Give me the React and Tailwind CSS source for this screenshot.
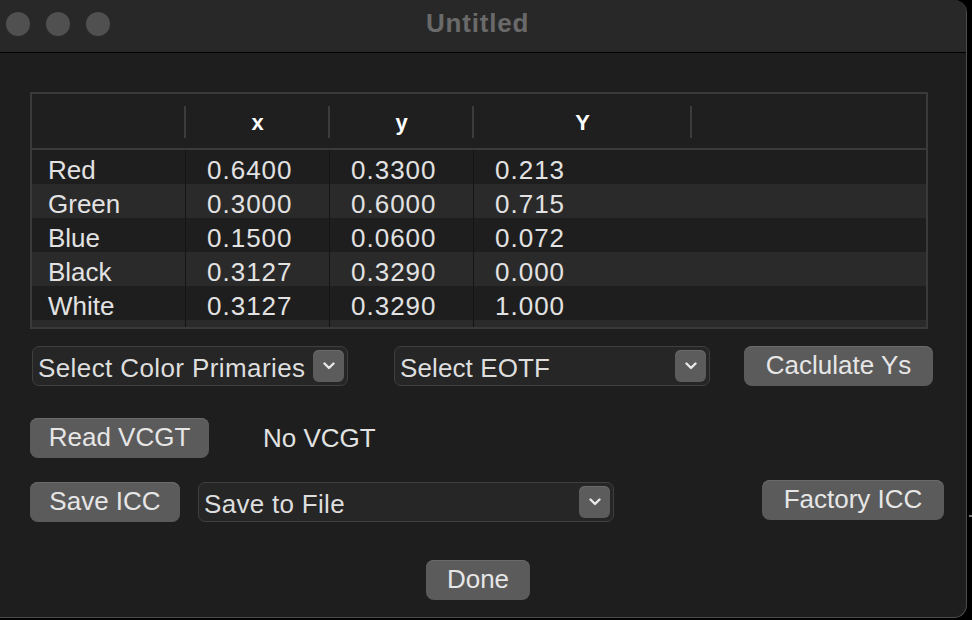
import React from "react";

const rows = [
  ["Red", "0.6400", "0.3300", "0.213"],
  ["Green", "0.3000", "0.6000", "0.715"],
  ["Blue", "0.1500", "0.0600", "0.072"],
  ["Black", "0.3127", "0.3290", "0.000"],
  ["White", "0.3127", "0.3290", "1.000"],
];

function Chevron() {
  return (
    <div className="w-[31px] h-[32px] rounded-[6px] bg-[#5c5c5c] flex items-center justify-center shrink-0 shadow-[inset_0_1px_0_#6a6a6a]">
      <svg width="12" height="8" viewBox="0 0 12 8">
        <path d="M1.5 1.5 L6 6 L10.5 1.5" fill="none" stroke="#e8e8e8" strokeWidth="2.4" strokeLinecap="round" strokeLinejoin="round" />
      </svg>
    </div>
  );
}

function Popup({ label, className, tracking }) {
  return (
    <div className={"h-[40px] shrink-0 rounded-[7px] border border-[#3f3f3f] bg-[#262626] flex items-center justify-between pl-[5px] pr-[3px] " + className}>
      <span className={"text-[26px] leading-none text-[#dedede] whitespace-nowrap pt-[3px] " + tracking}>{label}</span>
      <Chevron />
    </div>
  );
}

function Button({ label, className }) {
  return (
    <div className={"h-[40px] shrink-0 rounded-[8px] bg-[#5b5b5b] shadow-[inset_0_1px_0_#6b6b6b] flex items-center justify-center " + className}>
      <span className="text-[26px] leading-none text-[#e6e6e6] whitespace-nowrap pb-[3px]">{label}</span>
    </div>
  );
}

const cell = "h-full flex items-center pt-[5px] text-[26px] leading-none text-[#e2e2e2]";

export default function App() {
  return (
    <div className="w-[972px] h-[620px] bg-black flex overflow-hidden" style={{ fontFamily: '"Liberation Sans", Arial, sans-serif' }}>
      <div className="w-[967px] h-[618px] shrink-0 bg-[#1e1e1e] rounded-r-[13px] border-r border-b border-[#4c4c4c] flex flex-col overflow-hidden">
        {/* Title bar */}
        <div className="h-[53px] shrink-0 bg-[#282828] border-b border-black flex items-center">
          <div className="flex items-center gap-[16px] pl-[6px] mb-[4px] shrink-0">
            <div className="w-[24px] h-[24px] rounded-full bg-[#505050]" />
            <div className="w-[24px] h-[24px] rounded-full bg-[#505050]" />
            <div className="w-[24px] h-[24px] rounded-full bg-[#505050]" />
          </div>
          <span className="ml-[316px] mb-[7px] text-[26px] leading-none font-bold text-[#6a6a6a] tracking-[0.8px]">Untitled</span>
        </div>

        {/* Body */}
        <div className="flex flex-col px-[30px]">
          {/* Table */}
          <div className="mt-[39px] w-[898px] shrink-0 border-2 border-[#3a3a3a] flex flex-col">
            <div className="h-[54px] flex bg-[#1f1f1f] border-b-2 border-[#3a3a3a] box-content">
              <div className="w-[153px] shrink-0" />
              {[["x", 144], ["y", 144], ["Y", 218], ["", 235]].map(([h, w], i) => (
                <div key={i} className="flex items-start shrink-0" style={{ width: w }}>
                  <div className="w-[2px] h-[32px] mt-[12px] bg-[#3c3c3c] shrink-0 -ml-[1px]" />
                  <div className="flex-1 h-full flex items-center justify-center pt-[3px] text-[22px] leading-none font-bold text-white">{h}</div>
                </div>
              ))}
            </div>
            {rows.map((r, i) => (
              <div key={i} className={"h-[34px] flex items-center " + (i % 2 === 1 ? "bg-[#2a2a2a]" : "bg-[#1e1e1e]")}>
                <div className={"w-[153px] shrink-0 pl-[16px] " + cell}>{r[0]}</div>
                <div className={"w-[144px] shrink-0 border-l border-[#141414] pl-[21px] tracking-[1px] " + cell}>{r[1]}</div>
                <div className={"w-[144px] shrink-0 border-l border-[#141414] pl-[21px] tracking-[1px] " + cell}>{r[2]}</div>
                <div className={"flex-1 border-l border-[#141414] pl-[21px] tracking-[1px] " + cell}>{r[3]}</div>
              </div>
            ))}
            <div className="h-[7px] flex bg-[#2a2a2a]">
              <div className="w-[153px] h-full shrink-0" />
              <div className="w-[144px] h-full shrink-0 border-l border-[#141414]" />
              <div className="w-[144px] h-full shrink-0 border-l border-[#141414]" />
              <div className="flex-1 h-full border-l border-[#141414]" />
            </div>
          </div>

          {/* Row 1 */}
          <div className="mt-[17px] flex items-start">
            <Popup label="Select Color Primaries" className="ml-[2px] w-[316px]" tracking="tracking-[0.4px]" />
            <Popup label="Select EOTF" className="ml-[46px] w-[316px]" tracking="tracking-[0.1px]" />
            <Button label="Caclulate Ys" className="ml-[34px] w-[189px]" />
          </div>

          {/* Row 2 */}
          <div className="mt-[32px] flex items-center">
            <Button label="Read VCGT" className="w-[179px]" />
            <span className="ml-[54px] text-[26px] leading-none text-[#e2e2e2]">No VCGT</span>
          </div>

          {/* Row 3 */}
          <div className="mt-[22px] flex items-start">
            <Button label="Save ICC" className="mt-[2px] w-[150px]" />
            <Popup label="Save to File" className="mt-[2px] ml-[18px] w-[416px]" tracking="tracking-[0.3px]" />
            <Button label="Factory ICC" className="ml-[148px] w-[182px]" />
          </div>

          {/* Done */}
          <div className="mt-[38px] flex">
            <Button label="Done" className="ml-[396px] w-[104px]" />
          </div>
        </div>
      </div>
      <div className="pt-[515px]">
        <div className="ml-[2px] w-[3px] h-[2px] bg-[#777777]" />
      </div>
    </div>
  );
}
